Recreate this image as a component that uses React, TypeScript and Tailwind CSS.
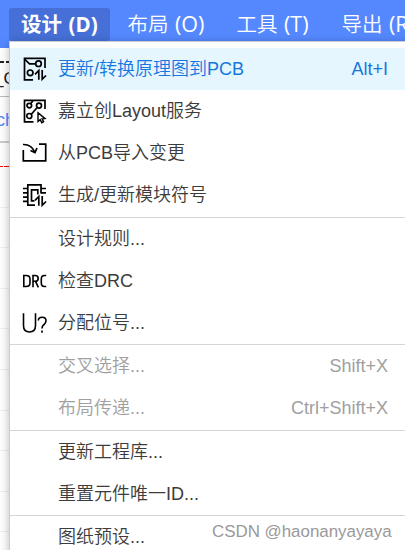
import type { ReactNode } from "react";

const uiFont = "font-['Liberation_Sans','Noto_Sans_CJK_SC',sans-serif]";
const barFont = "font-['Open_Sans','Noto_Sans_CJK_SC',sans-serif]";

function Icon({ children }: { children: ReactNode }) {
  return (
    <svg width="26" height="26" viewBox="0 0 26 26" fill="none" stroke="#000" strokeWidth="1.7" className="block">
      {children}
    </svg>
  );
}

const arrows = <path d="M14 18.3 L17.8 14.5 V23.8 M21.2 14 V23.3 L25 19.5" />;

const convertIcon = (
  <Icon>
    <path d="M12 23.8 H3.5 V2.3 H24 V12 M4 3.5 L8.5 7.8 H14.5" />
    <circle cx="17.5" cy="7.7" r="2.8" />
    <circle cx="9.2" cy="16.8" r="2.8" />
    {arrows}
  </Icon>
);

const layoutIcon = (
  <Icon>
    <path d="M12.5 23.8 H3.5 V2.3 H24 V11 M9.8 5.5 L12 2.8 M10.5 16 L16 9.7" />
    <circle cx="8.3" cy="7.6" r="2.3" />
    <circle cx="18" cy="7.6" r="2.5" />
    <circle cx="8.3" cy="18" r="2.5" />
    <path d="M17 14.8 V23.5 L19.2 21.7 L20.8 24.7 L22.6 23.7 L21.1 20.9 L24 20.6 Z" strokeWidth="1.4" />
  </Icon>
);

const importIcon = (
  <Icon>
    <path d="M2.3 10 V20.8 H24.7 V4.2 H18 M2 4.5 C8 4.2 11.5 7 13.8 12 M9.5 10.5 L14 12.6 L16 8" />
  </Icon>
);

const moduleIcon = (
  <Icon>
    <path d="M14 23.2 H6.8 V2.9 H20 V11.5 M13.5 18.8 H10.5 V7.8 H16.8 V12.5" />
    <path d="M2 6.5 H7 M2 10.8 H7 M2 15.2 H7 M2 19.4 H7 M20 6.5 H25 M20 10.8 H25" />
    {arrows}
  </Icon>
);

const drcIcon = (
  <Icon>
    <path
      d="M2.8 7.5 H5 Q9 7.5 9 11 V15 Q9 18.5 5 18.5 H2.8 Z M12 19.3 V7.5 H14.2 Q17.2 7.5 17.2 10.4 Q17.2 13.3 14.2 13.3 H12 M14.5 13.3 L17.4 19.3 M25.2 7.5 H23.5 Q20.3 7.5 20.3 11 V15 Q20.3 18.5 23.5 18.5 H25.2"
      strokeWidth="1.6"
    />
  </Icon>
);

const designatorIcon = (
  <Icon>
    <path
      d="M2.5 3.2 V15.5 Q2.5 22 8.5 22 Q14.5 22 14.5 15.5 V3.2 M17.3 10.5 Q17.5 7.3 21.2 7.3 Q25 7.3 25 10.8 Q25 13 23 14.5 Q21 15.8 21 18.5 M21 20.5 V22.8"
      strokeWidth="1.6"
    />
  </Icon>
);

type Item = { label: string; keys?: string; icon?: ReactNode; state?: "active" | "disabled" };

function Row({ label, keys, icon, state }: Item) {
  const tone =
    state === "active" ? "bg-[#e5f6ff] text-[#1677e0]" : state === "disabled" ? "text-[#a0a0a0]" : "text-[#3c3c3c]";
  return (
    <li className={`flex h-[42px] shrink-0 items-center pr-[17px] pl-[10.5px] ${tone}`}>
      <span className="w-[37.5px] shrink-0">{icon}</span>
      <span className="grow">{label}</span>
      {keys && <span>{keys}</span>}
    </li>
  );
}

function Title({ name, letter, active }: { name: string; letter: string; active?: boolean }) {
  return (
    <div
      className={`flex h-[33px] shrink-0 items-center gap-[6.5px] whitespace-nowrap ${
        active ? "w-[101px] rounded-[3px] bg-[#4670d8] pl-[12px] font-bold" : "font-[350]"
      }`}
    >
      <span className="text-[20.5px]">{name}</span>
      <span className={active ? "text-[20.5px]" : "text-[21.5px] font-normal"}>({letter})</span>
    </div>
  );
}

export default function App() {
  return (
    <div className={`relative h-[550px] w-[405px] overflow-hidden bg-white ${uiFont}`}>
      <header className={`flex h-12 bg-[#5588ff] pt-2 pl-[9px] text-white ${barFont}`}>
        <Title name="设计" letter="D" active />
        <div className="flex pl-[17.5px]">
          <div className="w-[109px]"><Title name="布局" letter="O" /></div>
          <div className="w-[105px]"><Title name="工具" letter="T" /></div>
          <Title name="导出" letter="R" />
        </div>
      </header>

      <aside className="flex h-[502px] w-[10px] flex-col overflow-hidden text-[18px]">
        <div className="h-[49px] shrink-0 border-b border-[#bbb] pt-[13px]">
          <div className="flex justify-between">
            <span className="h-[1.5px] w-[4px] bg-[#222]" />
            <span className="h-[1.5px] w-[4px] bg-[#222]" />
          </div>
          <div className="mt-[5px] -ml-[6px] text-[17px] leading-[22px] whitespace-nowrap text-[#222]">_C</div>
        </div>
        <div className="h-[46px] shrink-0 border-b-2 border-[#ccc] text-[18px] leading-[46px] text-[#5588ff]">
          <span className="-ml-[4px]">ch</span>
        </div>
        <div className="flex h-[24px] shrink-0 items-end gap-px">
          <span className="h-px w-[3px] bg-[#f00]" />
          <span className="h-px grow bg-[#f00]" />
        </div>
        {[0, 1, 2, 3, 4, 5, 6, 7, 8].map((n) => (
          <div key={n} className="h-[40.6px] shrink-0 border-b border-[#f0f0f0]" />
        ))}
      </aside>

      <nav className="absolute top-[41px] left-[9px] h-[520px] w-[408px] border border-[#ccc] bg-white shadow-[0_2px_9px_rgba(0,0,0,0.28)]">
        <ul className="flex w-[395px] flex-col pt-[6px] text-[18px] leading-[24px] font-[350]">
          <Row label="更新/转换原理图到PCB" keys="Alt+I" icon={convertIcon} state="active" />
          <Row label="嘉立创Layout服务" icon={layoutIcon} />
          <Row label="从PCB导入变更" icon={importIcon} />
          <Row label="生成/更新模块符号" icon={moduleIcon} />
          <li className="h-[2px] border-b border-[#d6d6d6]" />
          <Row label="设计规则..." />
          <Row label="检查DRC" icon={drcIcon} />
          <Row label="分配位号..." icon={designatorIcon} />
          <li className="h-px bg-[#d6d6d6]" />
          <Row label="交叉选择..." keys="Shift+X" state="disabled" />
          <Row label="布局传递..." keys="Ctrl+Shift+X" state="disabled" />
          <li className="h-[2px] border-b border-[#d6d6d6]" />
          <Row label="更新工程库..." />
          <Row label="重置元件唯一ID..." />
          <li className="h-px bg-[#d6d6d6]" />
          <Row label="图纸预设..." />
        </ul>
      </nav>

      <div className="absolute top-[520.5px] left-[212px] text-[16.9px] leading-[22px] whitespace-nowrap text-[#999]">
        CSDN @haonanyayaya
      </div>
    </div>
  );
}
